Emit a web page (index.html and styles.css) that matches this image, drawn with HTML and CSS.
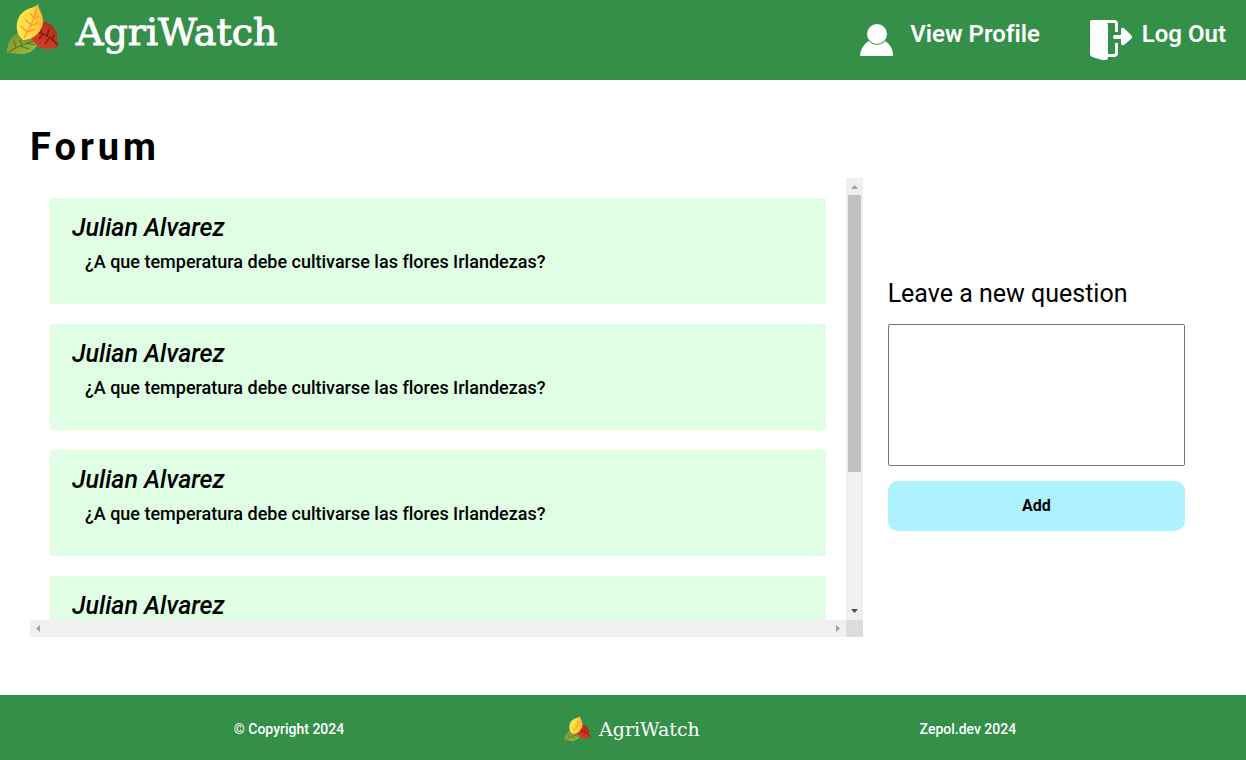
FILE: index.html
```html
<!DOCTYPE html>
<html lang="en">
<head>
<meta charset="utf-8">
<meta name="viewport" content="width=device-width, initial-scale=1">
<title>AgriWatch - Forum</title>
<link rel="stylesheet" href="styles.css">
</head>
<body>
<svg class="defs" aria-hidden="true">
  <defs>
    <linearGradient id="yellow" x1="0" y1="0" x2="1" y2="0"><stop offset="0" stop-color="#ffe554"/><stop offset="0.55" stop-color="#ffdc3c"/><stop offset="1" stop-color="#ffb52e"/></linearGradient>
    <linearGradient id="red" x1="0" y1="1" x2="1" y2="0"><stop offset="0" stop-color="#e2382f"/><stop offset="0.5" stop-color="#c93722"/><stop offset="1" stop-color="#9c2a15"/></linearGradient>
    <linearGradient id="green" x1="0" y1="0" x2="1" y2="1"><stop offset="0" stop-color="#71922f"/><stop offset="1" stop-color="#a5bd38"/></linearGradient>
    <symbol id="leaves" viewBox="0 0 54 52">
      <path fill="url(#green)" d="M1 49C1 38 6 31 14 28C22 25 30 29 34 35C31 45 24 50 15 50C9 50 5 48 1 49Z"/>
      <path fill="#8a8b45" d="M13 28C21 25 30 29 33 35L29 38C23 39 16 38 13 34Z"/>
      <path fill="none" stroke="#5c7425" stroke-width="1.2" d="M3 48C10 43 18 40 28 37M10 44L8 37M16 41L14 36M14 42L23 45M20 39L29 41"/>
      <path fill="url(#red)" d="M53 42C49 43 46 46 40 45C32 44 27 38 25 33C29 25 34 19 39 18C48 20 53 30 51 36C51 39 52 40 53 42Z"/>
      <path fill="none" stroke="#7a1d10" stroke-width="1.3" d="M52 41C45 33 38 29 29 28M35 29L35 23M41 32L43 25M46 36L48 31M37 30L33 35M43 34L39 40"/>
      <path fill="url(#yellow)" d="M32 0C32 5 37 9 37 17C37 27 28 36 17 36C10 30 9 21 13 13C17 6 24 4 28 3C30 2 31 1 32 0Z"/>
      <path fill="none" stroke="#ff9a38" stroke-width="1.5" d="M31 3C29 14 24 24 18 34M28 14L24 9M25 21L19 15M21 28L15 22M28 15L33 12M25 22L32 19M22 28L29 25"/>
    </symbol>
  </defs>
</svg>

<header class="header">
  <a class="brand" href="#">
    <svg class="brand-icon" aria-hidden="true"><use href="#leaves"/></svg>
    <span class="brand-name">AgriWatch</span>
  </a>
  <nav class="nav">
    <a class="nav-link" href="#">
      <svg class="nav-icon profile-icon" viewBox="0 0 34 34" fill="#fff" aria-hidden="true">
        <circle cx="17" cy="11" r="10"/>
        <path d="M0 32C1 25 5 20 9 18C13 23 21 23 25 18C30 21 33 26 33 32Q33 33 32 33H1Q0 33 0 32Z"/>
      </svg>
      <span>View Profile</span>
    </a>
    <a class="nav-link" href="#">
      <svg class="nav-icon logout-icon" viewBox="0 0 42 40" aria-hidden="true">
        <path fill="#fff" d="M2 0H24Q28 0 28 4V12H25V4Q25 3 24 3H17Q18 4 18 6V34H24Q25 34 25 33V23H28V33Q28 37 24 37H18V38Q18 40 16 40H12L2 37Q0 36 0 34V2Q0 0 2 0Z"/>
        <path fill="#fff" d="M24 15H31V9Q32 7 34 8L41 15Q43 17 41 19L34 25Q32 26 31 24V19H24Q22 17 24 15Z"/>
      </svg>
      <span>Log Out</span>
    </a>
  </nav>
</header>

<main class="main">
  <h1 class="title">Forum</h1>
  <div class="columns">
    <div class="forum">
      <section class="posts" aria-label="Questions" tabindex="0">
        <article class="post"><h2 class="author">Julian Alvarez</h2><p class="question">¿A que temperatura debe cultivarse las flores Irlandezas?</p></article>
        <article class="post"><h2 class="author">Julian Alvarez</h2><p class="question">¿A que temperatura debe cultivarse las flores Irlandezas?</p></article>
        <article class="post"><h2 class="author">Julian Alvarez</h2><p class="question">¿A que temperatura debe cultivarse las flores Irlandezas?</p></article>
        <article class="post"><h2 class="author">Julian Alvarez</h2></article>
      </section>
      <div class="bar bar-vertical" aria-hidden="true">
        <svg class="arrow" viewBox="0 0 17 17"><path fill="#a3a3a3" d="M5 11L8.5 7L12 11Z"/></svg>
        <div class="track"><div class="thumb"></div></div>
        <svg class="arrow" viewBox="0 0 17 17"><path fill="#505050" d="M5 6L8.5 10L12 6Z"/></svg>
      </div>
      <div class="bar bar-horizontal" aria-hidden="true">
        <svg class="arrow" viewBox="0 0 17 17"><path fill="#a3a3a3" d="M10 5L6 8.5L10 12Z"/></svg>
        <svg class="arrow" viewBox="0 0 17 17"><path fill="#a3a3a3" d="M7 5L11 8.5L7 12Z"/></svg>
      </div>
      <div class="corner"></div>
    </div>
    <form class="ask">
      <label class="ask-label" for="question">Leave a new question</label>
      <textarea class="ask-text" id="question"></textarea>
      <button class="ask-button" type="button">Add</button>
    </form>
  </div>
</main>

<footer class="footer">
  <p class="footer-text">© Copyright 2024</p>
  <a class="footer-brand" href="#">
    <svg class="footer-icon" aria-hidden="true"><use href="#leaves"/></svg>
    <span>AgriWatch</span>
  </a>
  <p class="footer-text">Zepol.dev 2024</p>
</footer>
</body>
</html>
```

FILE: styles.css
```css
* {
  box-sizing: border-box;
  margin: 0;
}

body {
  display: flex;
  flex-direction: column;
  min-height: 100vh;
  background: #fff;
  color: #000;
  font-family: Roboto, sans-serif;
  font-weight: 500;
  font-variant-ligatures: none;
}

a {
  color: inherit;
  text-decoration: none;
}

.defs {
  position: absolute;
  width: 0;
  height: 0;
}

.header {
  display: flex;
  justify-content: space-between;
  min-height: 80px;
  padding: 4px 20px 0 6px;
  background: #348f48;
  color: #fff;
}

.brand {
  display: flex;
  align-items: flex-start;
  gap: 16px;
}

.brand-icon {
  width: 54px;
  height: 52px;
}

.brand-name {
  font: 500 38px/56px "Roboto Slab", "DejaVu Serif", serif;
  -webkit-text-stroke: 1px #fff;
}

.nav {
  display: flex;
  align-items: flex-start;
  gap: 50px;
  padding-top: 16px;
}

.nav-link {
  display: flex;
  font-size: 24px;
  font-weight: 600;
  line-height: 28px;
}

.profile-icon {
  width: 34px;
  height: 34px;
  margin: 3px 16px 0 0;
}

.logout-icon {
  width: 42px;
  height: 40px;
  margin-right: 10px;
}

.main {
  flex: 1;
  padding: 41px 61px 58px 30px;
}

.title {
  font-size: 38px;
  line-height: 52px;
  letter-spacing: 4px;
}

.columns {
  display: grid;
  grid-template-columns: minmax(0, 14fr) minmax(0, 5fr);
  align-items: center;
  gap: 25px;
  padding-top: 5px;
}

.forum {
  display: grid;
  grid-template-columns: minmax(0, 1fr) 17px;
  grid-template-rows: auto 17px;
}

.posts {
  display: flex;
  flex-direction: column;
  gap: 20px;
  padding: 20px 20px 0;
}

.bar {
  display: flex;
  justify-content: space-between;
  background: #f0f0f0;
}

.bar-vertical {
  flex-direction: column;
}

.arrow {
  flex: none;
  width: 17px;
  height: 17px;
}

.track {
  flex: 1;
  padding: 0 2px;
}

.thumb {
  height: 68%;
  background: #c1c1c1;
}

.corner {
  background: #dcdcdc;
}

.post {
  padding: 15px 22px 29px;
  background: #dffee4;
}

.post:last-child {
  padding-bottom: 0;
}

.author {
  font-size: 25px;
  font-style: italic;
  font-weight: 500;
  line-height: 29px;
}

.question {
  padding: 6px 13px 0;
  font-size: 18px;
  line-height: 27px;
}

.ask {
  display: flex;
  flex-direction: column;
  padding-bottom: 4px;
}

.ask-label {
  margin-bottom: 16px;
  font-size: 25px;
  font-weight: 400;
  line-height: 28px;
}

.ask-text {
  height: 142px;
  margin-bottom: 15px;
  padding: 10px;
  border: 1px solid #767676;
  border-radius: 2px;
  font: inherit;
  resize: none;
}

.ask-button {
  height: 50px;
  border: 0;
  border-radius: 10px;
  background: #aef1ff;
  color: #000;
  font: 700 16px/20px Roboto, sans-serif;
}

.footer {
  display: flex;
  align-items: center;
  justify-content: space-evenly;
  min-height: 65px;
  padding: 3px 10px 0 14px;
  background: #348f48;
  color: #fff;
}

.footer-text {
  font-size: 14px;
  line-height: 20px;
}

.footer-brand {
  display: flex;
  align-items: center;
  gap: 8px;
  font: 500 19px/28px "Roboto Slab", "DejaVu Serif", serif;
}

.footer-icon {
  width: 27px;
  height: 26px;
}
```
